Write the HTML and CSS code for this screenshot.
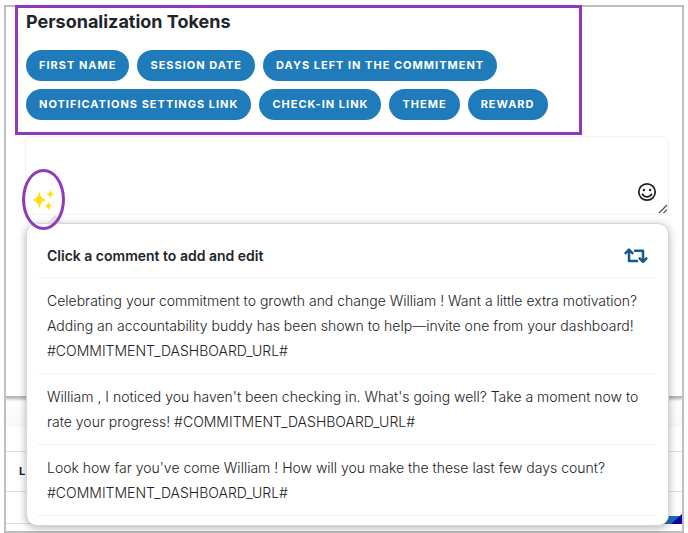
FILE: index.html
```html
<!DOCTYPE html>
<html lang="en">
<head>
<meta charset="utf-8">
<title>Personalization Tokens</title>
<link rel="stylesheet" href="styles.css">
</head>
<body>
<main class="frame">
  <section class="editor">
    <div class="tokens">
      <h1 class="tokens-title">Personalization Tokens</h1>
      <div class="token-list">
        <button class="token" type="button">First Name</button>
        <button class="token" type="button">Session Date</button>
        <button class="token" type="button">Days Left in the Commitment</button>
        <button class="token" type="button">Notifications Settings Link</button>
        <button class="token" type="button">Check-in Link</button>
        <button class="token" type="button">Theme</button>
        <button class="token" type="button">Reward</button>
      </div>
    </div>
    <div class="message">
      <textarea class="message-input" aria-label="Message"></textarea>
      <svg class="grip" width="10" height="10" viewBox="0 0 10 10" fill="none" stroke="#4a4a4a" stroke-width="1.2">
        <path d="M.8 9.200L9 1M5.400 9.200L9 5.600"/>
      </svg>
      <button class="emoji" type="button" aria-label="Insert emoji">
        <svg width="20" height="20" viewBox="0 0 20 20" fill="none" stroke="#1d1d25" stroke-width="1.7" stroke-linecap="round">
          <circle cx="10" cy="10" r="8.2"/>
          <path d="M5.4 12.2c1.9 3.6 7.3 3.6 9.2 0"/>
          <circle cx="6.9" cy="8" r="1.2" fill="#1d1d25" stroke="none"/>
          <circle cx="13.1" cy="8" r="1.2" fill="#1d1d25" stroke="none"/>
        </svg>
      </button>
      <div class="popover" role="dialog" aria-labelledby="popover-title">
        <header class="popover-head">
          <h2 class="popover-title" id="popover-title">Click a comment to add and edit</h2>
          <button class="refresh" type="button" aria-label="Show other comments">
            <svg width="24" height="16" viewBox="0 0 24 16" fill="none" stroke="#155a8a" stroke-width="2.5" stroke-linecap="round" stroke-linejoin="round">
              <path d="M1.6 5.2L5 1.7l3.4 3.5M5 2.2v10.9h8"/>
              <path d="M22.4 10.3L19 13.9l-3.4-3.6M19 13.4V2.7h-8"/>
            </svg>
          </button>
        </header>
        <button class="comment" type="button">Celebrating your commitment to growth and change William ! Want a little extra motivation? Adding an accountability buddy has been shown to help—invite one from your dashboard! #COMMITMENT_DASHBOARD_URL#</button>
        <button class="comment" type="button">William , I noticed you haven't been checking in. What's going well? Take a moment now to rate your progress! #COMMITMENT_DASHBOARD_URL#</button>
        <button class="comment" type="button">Look how far you've come William ! How will you make the these last few days count? #COMMITMENT_DASHBOARD_URL#</button>
      </div>
      <button class="suggest" type="button" aria-label="Suggest comments">
        <svg width="24" height="22" viewBox="0 0 24 22" fill="#ffdd15">
          <path d="M7.300 1C8 7 9 9 14 11C9 13 8 15 7.300 21C6.600 15 5.600 13 .4 11C5.600 9 6.600 7 7.300 1Z"/>
          <path d="M18.400.3C18.900 3.300 19.600 4.300 22 5.200C19.600 6.100 18.900 7.100 18.400 10.100C17.900 7.100 17.200 6.100 14.600 5.200C17.200 4.300 17.900 3.300 18.400.3Z"/>
          <path d="M16.500 12C17 15 17.700 16 20.300 16.900C17.700 17.800 17 18.800 16.500 21.800C16 18.800 15.300 17.800 12.700 16.900C15.300 16 16 15 16.500 12Z"/>
        </svg>
      </button>
    </div>
  </section>
  <section class="list">
    <div class="list-band"></div>
    <div class="list-row list-gap"></div>
    <div class="list-row list-head">L</div>
    <div class="list-row list-body"></div>
    <div class="corner">
      <svg width="27" height="10" viewBox="0 0 27 10">
        <path fill="#1b6fb5" d="M0 2h27v8H0z"/>
        <path fill="#1105a8" d="M16 10L27 0v10z"/>
      </svg>
    </div>
  </section>
</main>
</body>
</html>
```
FILE: styles.css
```css
* {
  box-sizing: border-box;
}

body {
  margin: 0;
  padding: 5px 4px 0;
  background: #fff;
  color: #222;
  font-family: Inter, "Liberation Sans", sans-serif;
  font-size: 14px;
}

button {
  font: inherit;
  color: inherit;
  background: none;
  border: 0;
  padding: 0;
  cursor: pointer;
}

svg {
  display: block;
}

.frame {
  border: 2px solid #bebebe;
}

.editor {
  position: relative;
  z-index: 1;
  padding-bottom: 181px;
  border-bottom: 2px solid #b8b8b8;
  box-shadow: 0 2px 2px #ccc;
}

.tokens {
  position: relative;
  margin: -2px 100px 0 9px;
  padding: 3px 8px 12px;
  border: 3px solid #9138bb;
}

.tokens-title {
  margin: 0 0 17px;
  color: #212529;
  font-size: 18px;
  font-weight: 700;
  line-height: 22px;
}

.token-list {
  display: flex;
  flex-wrap: wrap;
  gap: 8px;
}

.token {
  padding: 0 13px;
  border-radius: 16px;
  background: #1f7bba;
  color: #fff;
  font-size: 11px;
  font-weight: 700;
  line-height: 31px;
  letter-spacing: 1px;
  text-transform: uppercase;
}

.message {
  position: relative;
  margin: 1px 13px 0 19px;
}

.message-input {
  display: block;
  width: 100%;
  height: 79px;
  padding: 8px;
  border: 1px solid #f2f2f2;
  border-radius: 5px;
  resize: vertical;
  font: inherit;
}

.message-input::-webkit-resizer {
  display: none;
}

.grip {
  position: absolute;
  right: 1px;
  top: 68px;
  pointer-events: none;
}

.emoji {
  position: absolute;
  right: 12px;
  top: 46px;
}

.suggest {
  position: absolute;
  left: -3px;
  top: 33px;
  display: grid;
  place-items: center;
  width: 43px;
  height: 61px;
  border: 3px solid #9138bb;
  border-radius: 50%;
}

.popover {
  position: absolute;
  top: 87px;
  left: 1px;
  right: 0;
  padding: 10px 10px 9px;
  border: 1px solid #d6d6d6;
  border-radius: 11px;
  background: #fff;
  box-shadow: 0 2px 8px rgba(0, 0, 0, 0.3);
}

.popover::before {
  content: "";
  position: absolute;
  top: -9px;
  left: 20px;
  border: 8px solid transparent;
  border-top: 0;
  border-bottom-color: #dedede;
}

.popover-head {
  display: flex;
  align-items: center;
  justify-content: space-between;
  height: 43px;
  padding: 0 10px;
}

.popover-title {
  margin: 0;
  color: #212529;
  font-size: 14px;
  font-weight: 600;
}

.comment {
  display: block;
  width: 100%;
  padding: 10px;
  border-top: 1px solid #f4f4f4;
  text-align: left;
  font-weight: 300;
  line-height: 25px;
}

.comment:last-child {
  border-bottom: 1px solid #f4f4f4;
}

.list {
  position: relative;
  padding-top: 4px;
}

.list-band {
  height: 25px;
  background: linear-gradient(#fff, #f9f9f9);
}

.list-row {
  border-bottom: 1px solid #dedede;
}

.list-gap {
  height: 25px;
}

.list-head {
  padding-left: 13px;
  color: #171c35;
  font-size: 11px;
  font-weight: 700;
  line-height: 39px;
}

.list-body {
  height: 32px;
  margin-bottom: 7px;
}

.corner {
  position: absolute;
  right: 0;
  bottom: 0;
}
```
